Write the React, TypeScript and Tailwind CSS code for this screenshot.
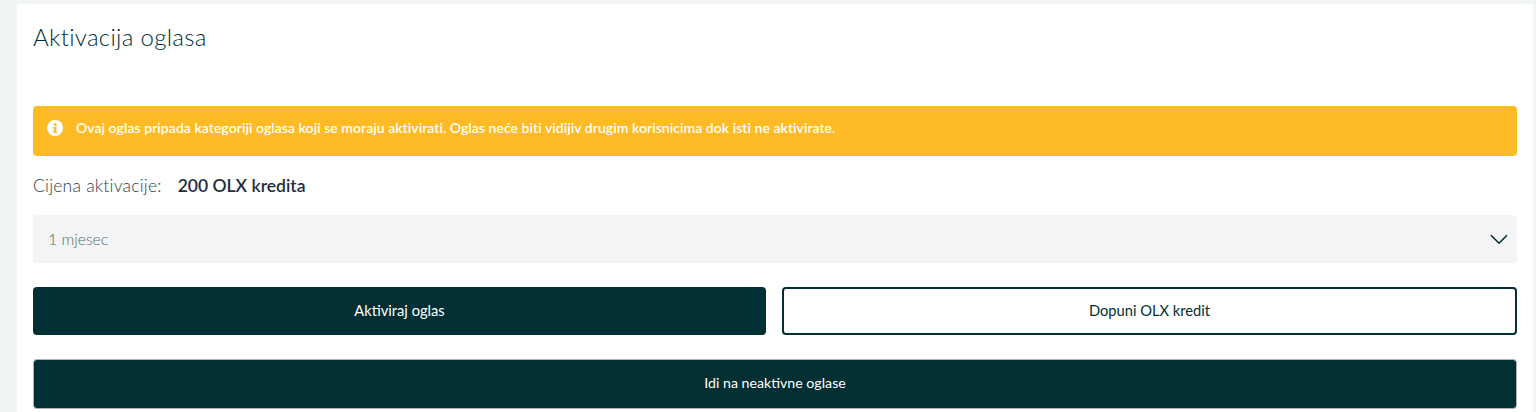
import React from "react";

export default function App() {
  return (
    <div className="h-[412px] overflow-hidden bg-[#f1f4f5] pl-[17px] pr-[3px] pt-[4px] font-['Lato','Liberation_Sans',sans-serif] text-[#022f34]">
      <div className="h-[408px] overflow-hidden rounded-t-[2px] bg-white px-4">
        <h1 className="mt-[18px] text-[24px] font-light leading-[30px] tracking-[0.3px]">Aktivacija oglasa</h1>
        <div className="mt-[54px] flex h-[50px] items-center rounded-[4px] bg-[#ffbb25] pb-[7px] pl-[14px] text-white">
          <svg width="16" height="16" viewBox="0 0 16 16" className="shrink-0">
            <circle cx="8" cy="8" r="8" fill="#fff" />
            <circle cx="8.2" cy="4.4" r="1.5" fill="#ffbb25" />
            <path d="M6.2 6.9h3.1v4.6h1v1.3H5.9v-1.3h1V8.2h-.7z" fill="#ffbb25" />
          </svg>
          <p className="ml-[13px] text-[14px] font-semibold leading-[18px] tracking-[0.045px]">
            Ovaj oglas pripada kategoriji oglasa koji se moraju aktivirati. Oglas neće biti vidijiv drugim korisnicima dok isti ne aktivirate.
          </p>
        </div>
        <div className="mt-[19px] flex h-[22px] items-center pb-[1px] text-[17.5px] leading-[22px]">
          <span className="font-light tracking-[0.22px] text-[#2e3e4a]">Cijena aktivacije:</span>
          <span className="ml-4 font-semibold text-[#1f2d3d]">200 OLX kredita</span>
        </div>
        <div className="mt-[18px] flex h-[48px] items-center justify-between rounded-[4px] bg-[#f2f4f5] pl-[15px] pr-[9px]">
          <span className="text-[16px] font-light tracking-[-0.1px] text-[#5f6b70]">1 mjesec</span>
          <svg width="18" height="11" viewBox="0 0 18 11" fill="none" stroke="#022f34" strokeWidth="1.6">
            <path d="M1 1.2l8 8 8-8" />
          </svg>
        </div>
        <div className="mt-6 flex gap-4">
          <button className="h-[48px] w-[733px] rounded-[4px] bg-[#022f34] pb-[2px] text-[14.7px] text-white">Aktiviraj oglas</button>
          <button className="h-[48px] flex-1 rounded-[4px] border-2 border-[#022f34] bg-white pb-[2px] text-[14.7px] text-[#022f34]">Dopuni OLX kredit</button>
        </div>
        <button className="mt-6 h-[50px] w-full rounded-[4px] border border-[#a9b3b4] bg-[#022f34] pb-[2px] text-[14.2px] text-white">Idi na neaktivne oglase</button>
      </div>
    </div>
  );
}
